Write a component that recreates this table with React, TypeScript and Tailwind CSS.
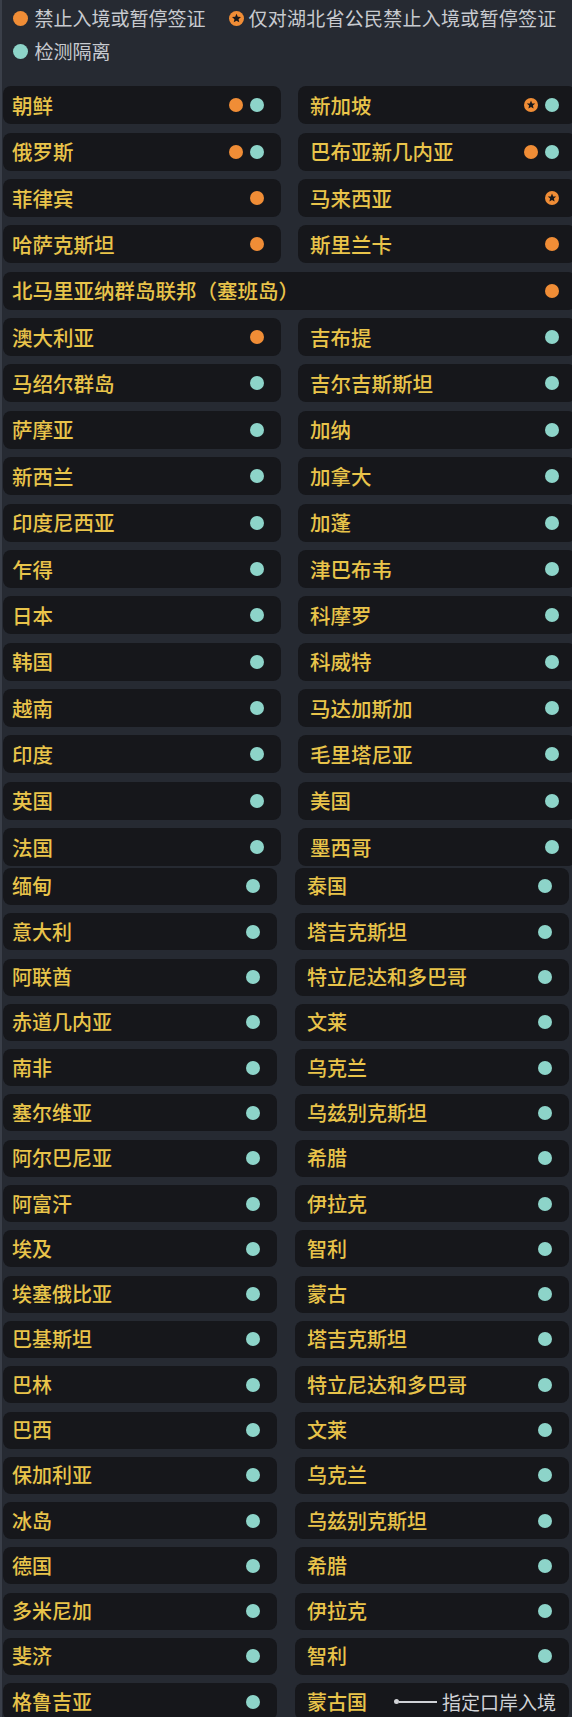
import React from 'react';

type Mark = 'o' | 's' | 't';

interface Row {
  left: [string, Mark[]];
  right?: [string, Mark[]];
  wide?: boolean;
}

const FONT = { fontFamily: '"Noto Sans CJK SC", "Noto Sans", sans-serif' };

const T: Mark[] = ['t'];
const O: Mark[] = ['o'];

const topRows: Row[] = [
  { left: ['朝鲜', ['o', 't']], right: ['新加坡', ['s', 't']] },
  { left: ['俄罗斯', ['o', 't']], right: ['巴布亚新几内亚', ['o', 't']] },
  { left: ['菲律宾', O], right: ['马来西亚', ['s']] },
  { left: ['哈萨克斯坦', O], right: ['斯里兰卡', O] },
  { left: ['北马里亚纳群岛联邦（塞班岛）', O], wide: true },
  { left: ['澳大利亚', O], right: ['吉布提', T] },
  { left: ['马绍尔群岛', T], right: ['吉尔吉斯斯坦', T] },
  { left: ['萨摩亚', T], right: ['加纳', T] },
  { left: ['新西兰', T], right: ['加拿大', T] },
  { left: ['印度尼西亚', T], right: ['加蓬', T] },
  { left: ['乍得', T], right: ['津巴布韦', T] },
  { left: ['日本', T], right: ['科摩罗', T] },
  { left: ['韩国', T], right: ['科威特', T] },
  { left: ['越南', T], right: ['马达加斯加', T] },
  { left: ['印度', T], right: ['毛里塔尼亚', T] },
  { left: ['英国', T], right: ['美国', T] },
  { left: ['法国', T], right: ['墨西哥', T] },
];

const bottomRows: [string, string][] = [
  ['缅甸', '泰国'],
  ['意大利', '塔吉克斯坦'],
  ['阿联酋', '特立尼达和多巴哥'],
  ['赤道几内亚', '文莱'],
  ['南非', '乌克兰'],
  ['塞尔维亚', '乌兹别克斯坦'],
  ['阿尔巴尼亚', '希腊'],
  ['阿富汗', '伊拉克'],
  ['埃及', '智利'],
  ['埃塞俄比亚', '蒙古'],
  ['巴基斯坦', '塔吉克斯坦'],
  ['巴林', '特立尼达和多巴哥'],
  ['巴西', '文莱'],
  ['保加利亚', '乌克兰'],
  ['冰岛', '乌兹别克斯坦'],
  ['德国', '希腊'],
  ['多米尼加', '伊拉克'],
  ['斐济', '智利'],
];

const StarDot: React.FC<{ size?: number }> = ({ size = 14 }) => (
  <svg width={size} height={size} viewBox="0 0 14 14" className="shrink-0">
    <circle cx="7" cy="7" r="7" fill="#f08d36" />
    <path
      d="M7 2.6 L8.2 5.4 L11.2 5.6 L8.9 7.6 L9.6 10.6 L7 9 L4.4 10.6 L5.1 7.6 L2.8 5.6 L5.8 5.4 Z"
      fill="#17181c"
    />
  </svg>
);

const Dot: React.FC<{ mark: Mark }> = ({ mark }) => {
  if (mark === 's') return <StarDot />;
  return (
    <span
      className={`block w-[14px] h-[14px] rounded-full shrink-0 ${mark === 'o' ? 'bg-[#f08d36]' : 'bg-[#8dd4c9]'}`}
    />
  );
};

const Card: React.FC<{
  name: string;
  marks: Mark[];
  first?: boolean;
  big?: boolean;
  className?: string;
}> = ({ name, marks, first, big, className = '' }) => (
  <div
    className={`flex items-center rounded-lg bg-[#16171b] pr-[17px] ${first ? 'pl-[9px]' : 'pl-[12px]'} ${big ? 'h-[38px]' : 'h-[37px]'} ${className}`}
  >
    <span className={`flex-1 whitespace-nowrap font-medium text-[#e9c44a] ${big ? 'text-[20.5px]' : 'text-[20px]'}`}>
      {name}
    </span>
    <div className="flex items-center gap-[7px]">
      {marks.map((m, i) => (
        <Dot key={i} mark={m} />
      ))}
    </div>
  </div>
);

export default function App() {
  return (
    <div
      style={FONT}
      className="w-[572px] h-[1717px] overflow-hidden bg-[#262a32] border-l-[2px] border-[#3a3f49]"
    >
      {/* legend */}
      <div className="pt-[2px] pl-[10.5px] text-[19px] text-[#c8cbd0]">
        <div className="flex items-center h-[33px]">
          <span className="block w-[15px] h-[15px] rounded-full bg-[#f08d36]" />
          <span className="ml-[7px]">禁止入境或暂停签证</span>
          <span className="ml-[23px]">
            <StarDot size={15} />
          </span>
          <span className="ml-[5px] tracking-[0.25px]">仅对湖北省公民禁止入境或暂停签证</span>
        </div>
        <div className="flex items-center h-[33px]">
          <span className="block w-[15px] h-[15px] rounded-full bg-[#8dd4c9]" />
          <span className="ml-[7px]">检测隔离</span>
        </div>
      </div>

      {/* first block */}
      <div className="mt-[18.3px] pl-[1px] grid grid-cols-[278px_278px] gap-x-[17px] gap-y-[8.37px]">
        {topRows.map((r, i) =>
          r.wide ? (
            <Card key={i} name={r.left[0]} marks={r.left[1]} first big className="col-span-2" />
          ) : (
            <React.Fragment key={i}>
              <Card name={r.left[0]} marks={r.left[1]} first big />
              {r.right && <Card name={r.right[0]} marks={r.right[1]} big />}
            </React.Fragment>
          )
        )}
      </div>

      {/* second block */}
      <div className="mt-[1.9px] pl-[1px] grid grid-cols-[274px_274px] gap-x-[18px] gap-y-[8.3px]">
        {bottomRows.map(([l, r], i) => (
          <React.Fragment key={i}>
            <Card name={l} marks={T} first />
            <Card name={r} marks={T} />
          </React.Fragment>
        ))}
        <Card name="格鲁吉亚" marks={T} first />
        <div className="flex items-center h-[37px] rounded-lg bg-[#16171b] pl-[12px]">
          <span className="w-[87px] whitespace-nowrap font-medium text-[20px] text-[#e9c44a]">蒙古国</span>
          <span className="block w-[5px] h-[5px] rounded-full bg-[#d0d2d6]" />
          <span className="block w-[38px] h-[1.5px] bg-[#d0d2d6]" />
          <span className="ml-[5px] whitespace-nowrap text-[19px] text-[#d0d2d6]">指定口岸入境</span>
        </div>
      </div>
    </div>
  );
}
